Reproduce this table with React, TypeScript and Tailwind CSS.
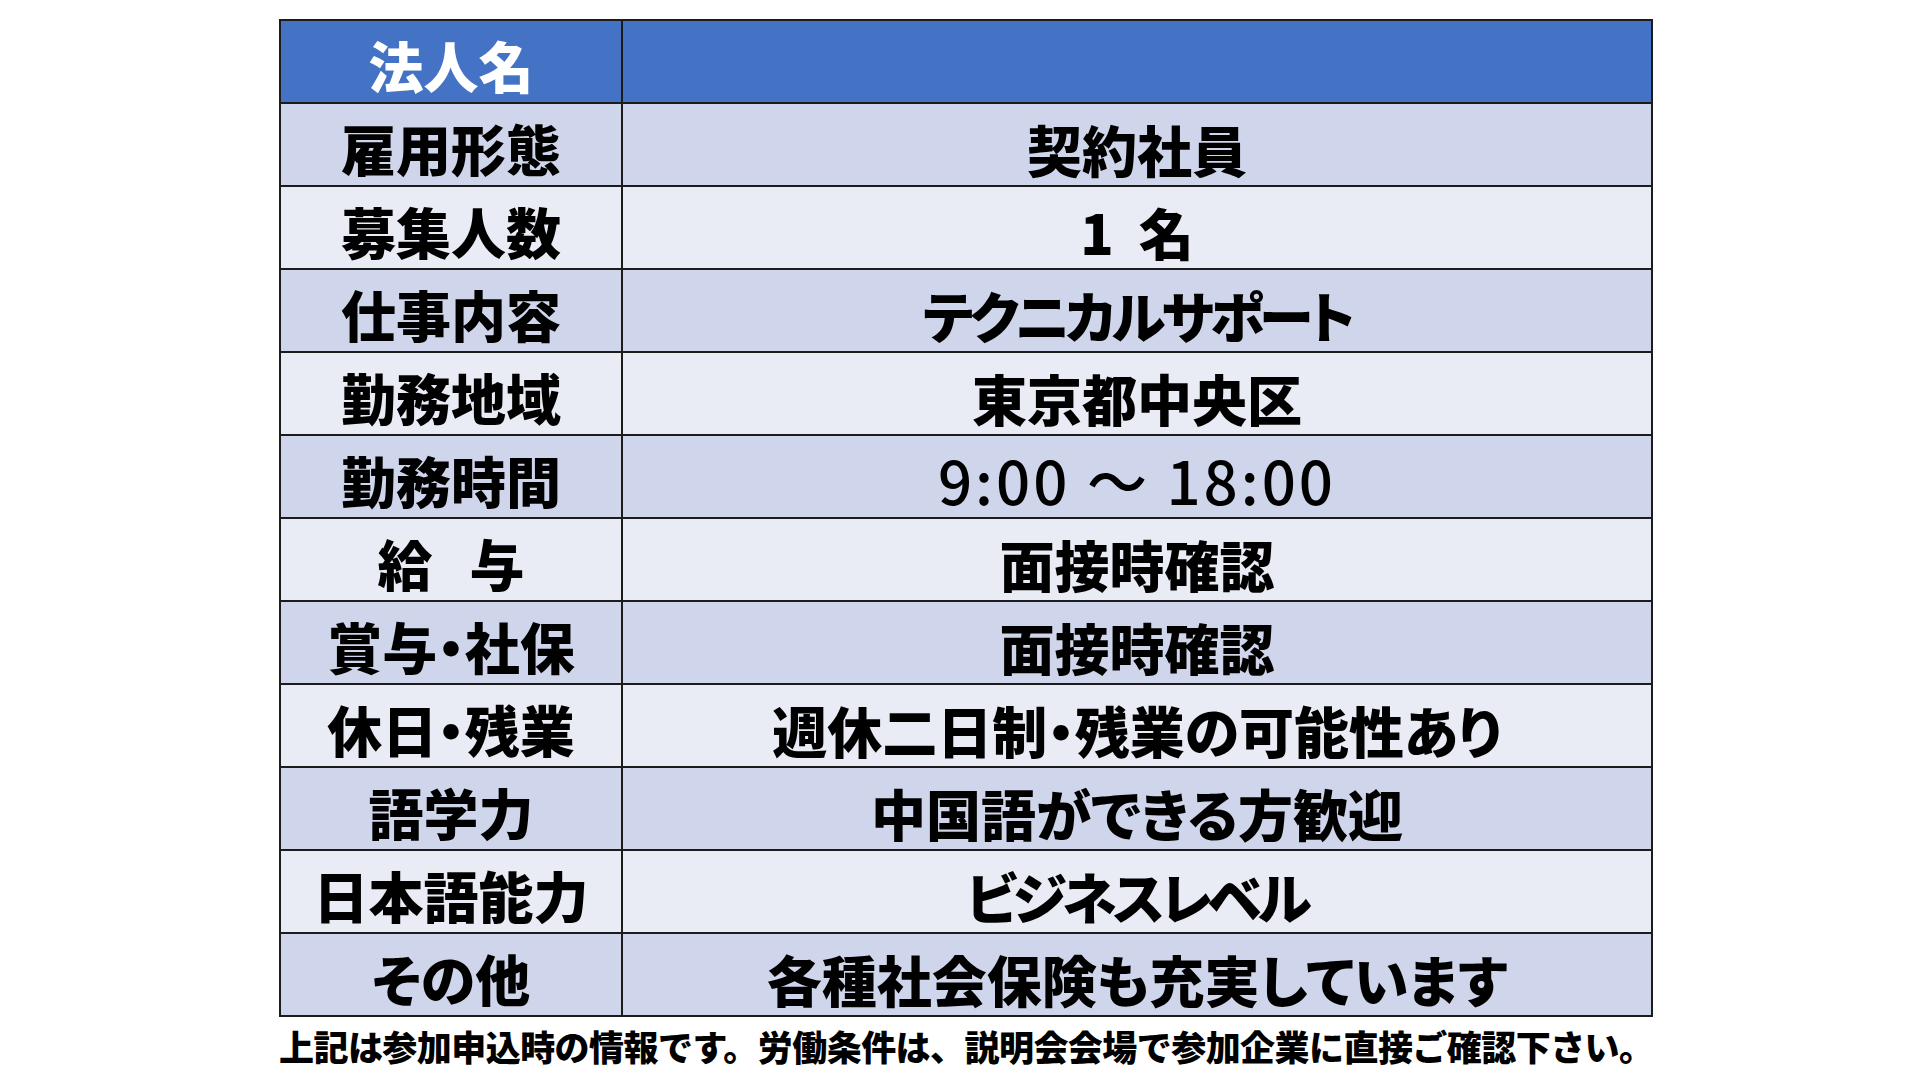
import React from "react";

const rows: { label: React.ReactNode; value: React.ReactNode; dark: boolean; kind?: "time" | "kana" }[] = [
  { label: "雇用形態", value: "契約社員", dark: true },
  { label: "募集人数", value: "1  名", dark: false },
  { label: "仕事内容", value: "テクニカルサポート", dark: true, kind: "kana" },
  { label: "勤務地域", value: "東京都中央区", dark: false },
  { label: "勤務時間", value: "9:00 ～ 18:00", dark: true, kind: "time" },
  {
    label: (
      <>
        給<span className="tracking-[-18px]">　</span>与
      </>
    ),
    value: "面接時確認",
    dark: false,
  },
  { label: "賞与・社保", value: "面接時確認", dark: true },
  { label: "休日・残業", value: "週休二日制・残業の可能性あり", dark: false },
  { label: "語学力", value: "中国語ができる方歓迎", dark: true },
  { label: "日本語能力", value: "ビジネスレベル", dark: false, kind: "kana" },
  { label: "その他", value: "各種社会保険も充実しています", dark: true },
];

export default function App() {
  return (
    <div
      className="w-[1920px] h-[1080px] bg-white overflow-hidden text-black"
      style={{ fontFamily: '"Noto Sans CJK JP", "Noto Sans", sans-serif' }}
    >
      <div className="ml-[279px] pt-[19px] w-[1374px]">
        <div className="border-2 border-[#1c1c1c] flex flex-col [font-feature-settings:'palt']">
          <div className="flex h-[81px] bg-[#4472c4]">
            <div className="w-[342px] border-r-2 border-[#1c1c1c] flex items-center justify-center pt-[6px] text-[55px] font-black leading-none text-white">
              法人名
            </div>
            <div className="flex-1" />
          </div>
          {rows.map((r, i) => (
            <div
              key={i}
              className={`flex h-[83px] border-t-2 border-[#1c1c1c] ${r.dark ? "bg-[#cfd5ea]" : "bg-[#e9ebf5]"}`}
            >
              <div className="w-[342px] border-r-2 border-[#1c1c1c] flex items-center justify-center pt-[6px] text-[55px] font-black leading-none whitespace-pre">
                {r.label}
              </div>
              <div
                className={`flex-1 flex items-center justify-center leading-none whitespace-pre ${
                  r.kind === "time"
                    ? "text-[60px] font-medium pt-[4px] tracking-[3px]"
                    : r.kind === "kana"
                    ? "text-[55px] font-black pt-[8px] tracking-[-4px]"
                    : "text-[55px] font-black pt-[8px]"
                }`}
              >
                {r.value}
              </div>
            </div>
          ))}
        </div>
        <div className="mt-[11px] text-[35px] font-black leading-none whitespace-nowrap tracking-[-0.55px]">
          上記は参加申込時の情報です。労働条件は、説明会会場で参加企業に直接ご確認下さい。
        </div>
      </div>
    </div>
  );
}
